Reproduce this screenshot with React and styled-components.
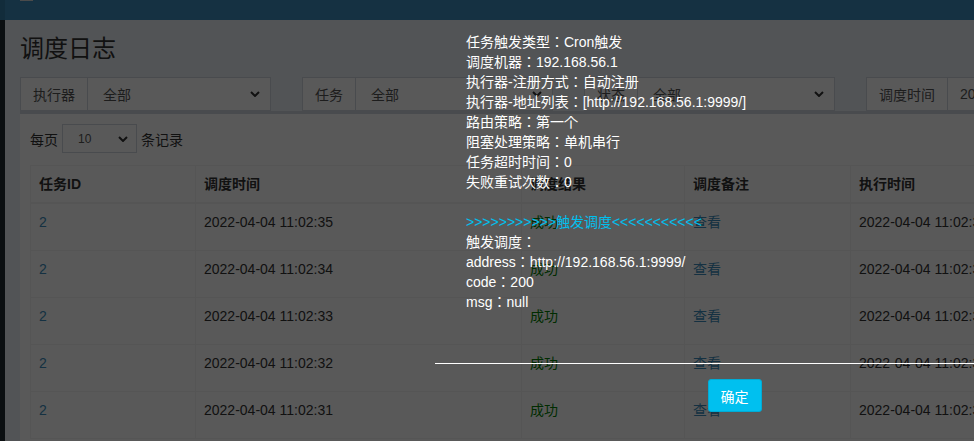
import React from "react";
import styled, { createGlobalStyle } from "styled-components";

const GlobalStyle = createGlobalStyle`
html, body {
    margin: 0;
    padding: 0;
    width: 974px;
    height: 441px;
    overflow: hidden;
}
body {
    font-family: "Liberation Sans", "Noto Sans CJK SC", sans-serif;
    font-size: 14px;
    color: #333;
}
`;

const Page = styled.div`
position: relative;
display: flex;
flex-direction: column;
width: 974px;
height: 441px;
overflow: hidden;
`;

const TopBar = styled.div`
display: flex;
height: 20px;
flex-shrink: 0;
`;

const LogoCell = styled.div`
width: 5px;
background-color: #367fa9;
`;

const NavBar = styled.div`
flex: 1;
background-color: #3c8dbc;
padding-left: 15px;
`;

const ToggleBar = styled.div`
width: 13px;
height: 1px;
background-color: #d8d8d8;
`;

const Main = styled.div`
display: flex;
flex: 1;
min-height: 0;
`;

const Sidebar = styled.div`
width: 5px;
flex-shrink: 0;
background-color: #222d32;
`;

const Content = styled.div`
flex: 1;
min-width: 0;
background-color: #ecf0f5;
padding: 0 0 0 15px;
overflow: hidden;
`;

const Title = styled.h1`
margin: 15px 0 14px;
font-size: 24px;
line-height: 28px;
font-weight: 400;
color: #333;
`;

const FilterRow = styled.div`
display: flex;
gap: 31px;
width: 1200px;
`;

const Group = styled.div`
display: flex;
width: ${(props) => props.$w || 251}px;
height: 34px;
flex-shrink: 0;
`;

const Addon = styled.div`
display: flex;
align-items: center;
padding: 0 12px;
border: 1px solid #d2d6de;
background-color: #fff;
color: #555;
white-space: nowrap;
`;

const SelectBox = styled.div`
flex: 1;
display: flex;
align-items: center;
justify-content: space-between;
padding: 0 10px 0 ${(props) => props.$pl || 15}px;
border: 1px solid #d2d6de;
border-left: none;
background-color: #fff;
color: #555;
font-size: ${(props) => props.$small ? "12px" : "14px"};
white-space: nowrap;
`;

const Box = styled.div`
width: 1200px;
border-top: 3px solid #d2d6de;
background-color: #fff;
padding: 10px;
`;

const LengthRow = styled.div`
display: flex;
align-items: center;
gap: 4px;
height: 29px;
color: #333;
`;

const PageSize = styled(SelectBox)`
flex: none;
width: 75px;
height: 29px;
box-sizing: border-box;
border-left: 1px solid #d2d6de;
padding: 0 8px 0 15px;
`;

const Table = styled.table`
margin-top: 12px;
border-collapse: collapse;
border: 1px solid #f4f4f4;
table-layout: fixed;
width: 1121px;
`;

const Th = styled.th`
box-sizing: border-box;
width: ${(props) => props.$w}px;
padding: 8px;
line-height: 20px;
text-align: left;
font-weight: 700;
color: #333;
border: 1px solid #f4f4f4;
border-bottom: 2px solid #f4f4f4;
white-space: nowrap;
`;

const Td = styled.td`
padding: 8px 8px 18px;
line-height: 20px;
border: 1px solid #f4f4f4;
white-space: nowrap;
overflow: hidden;
color: ${(props) => props.$tone === "link" ? "#3c8dbc" : props.$tone === "ok" ? "#008000" : "#333"};
`;

const Backdrop = styled.div`
position: absolute;
inset: 0;
background-color: rgba(0, 0, 0, 0.65);
`;

const Modal = styled.div`
position: absolute;
left: 435px;
top: 32px;
width: 599px;
color: #fff;
font-family: "Liberation Sans", "Noto Sans CJK JP", sans-serif;
`;

const ModalBody = styled.div`
padding: 0 0 51px 31px;
font-size: 14px;
line-height: 20px;
`;

const Line = styled.div`
height: 20px;
white-space: nowrap;
color: ${(props) => props.$hl ? "#00c0ef" : "#fff"};
`;

const ModalFooter = styled.div`
border-top: 1px solid #fff;
padding-top: 15px;
text-align: center;
`;

const OkButton = styled.button`
height: 33px;
padding: 0 12px;
border: 1px solid #00acd6;
border-radius: 3px;
background-color: #00c0ef;
color: #fff;
font-family: "Liberation Sans", "Noto Sans CJK SC", sans-serif;
font-size: 14px;
`;

function Chevron() {
    return (
        <svg width="10" height="6" viewBox="0 0 10 6">
            <polyline points="1,1 5,5 9,1" fill="none" stroke="#333" strokeWidth="2" />
        </svg>
    );
}

const rows = ["35", "34", "33", "32", "31"];

const logLines = [
    "任务触发类型：Cron触发",
    "调度机器：192.168.56.1",
    "执行器-注册方式：自动注册",
    "执行器-地址列表：[http://192.168.56.1:9999/]",
    "路由策略：第一个",
    "阻塞处理策略：单机串行",
    "任务超时时间：0",
    "失败重试次数：0",
];

function App() {
    return (
        <>
            <GlobalStyle />
            <Page>
                <TopBar>
                    <LogoCell />
                    <NavBar><ToggleBar /></NavBar>
                </TopBar>
                <Main>
                    <Sidebar />
                    <Content>
                        <Title>调度日志</Title>
                        <FilterRow>
                            <Group>
                                <Addon>执行器</Addon>
                                <SelectBox>全部<Chevron /></SelectBox>
                            </Group>
                            <Group>
                                <Addon>任务</Addon>
                                <SelectBox>全部<Chevron /></SelectBox>
                            </Group>
                            <Group>
                                <Addon>状态</Addon>
                                <SelectBox>全部<Chevron /></SelectBox>
                            </Group>
                            <Group $w={400}>
                                <Addon>调度时间</Addon>
                                <SelectBox $pl={12}>2022-04-04 00:00:00 - 2022-04-04 23:59:59</SelectBox>
                            </Group>
                        </FilterRow>
                        <Box>
                            <LengthRow>
                                每页
                                <PageSize $small>10<Chevron /></PageSize>
                                条记录
                            </LengthRow>
                            <Table>
                                <thead>
                                    <tr>
                                        <Th $w={165}>任务ID</Th>
                                        <Th $w={326}>调度时间</Th>
                                        <Th $w={163}>调度结果</Th>
                                        <Th $w={166}>调度备注</Th>
                                        <Th $w={300}>执行时间</Th>
                                    </tr>
                                </thead>
                                <tbody>
                                    {rows.map((s) => (
                                        <tr key={s}>
                                            <Td $tone="link">2</Td>
                                            <Td>2022-04-04 11:02:{s}</Td>
                                            <Td $tone="ok">成功</Td>
                                            <Td $tone="link">查看</Td>
                                            <Td>2022-04-04 11:02:{s}</Td>
                                        </tr>
                                    ))}
                                </tbody>
                            </Table>
                        </Box>
                    </Content>
                </Main>
                <Backdrop />
                <Modal>
                    <ModalBody>
                        {logLines.map((l) => <Line key={l}>{l}</Line>)}
                        <Line>&nbsp;</Line>
                        <Line $hl>{">>>>>>>>>>>触发调度<<<<<<<<<<<"}</Line>
                        <Line>触发调度：</Line>
                        <Line>address：http://192.168.56.1:9999/</Line>
                        <Line>code：200</Line>
                        <Line>msg：null</Line>
                    </ModalBody>
                    <ModalFooter>
                        <OkButton>确定</OkButton>
                    </ModalFooter>
                </Modal>
            </Page>
        </>
    );
}

export default App;
